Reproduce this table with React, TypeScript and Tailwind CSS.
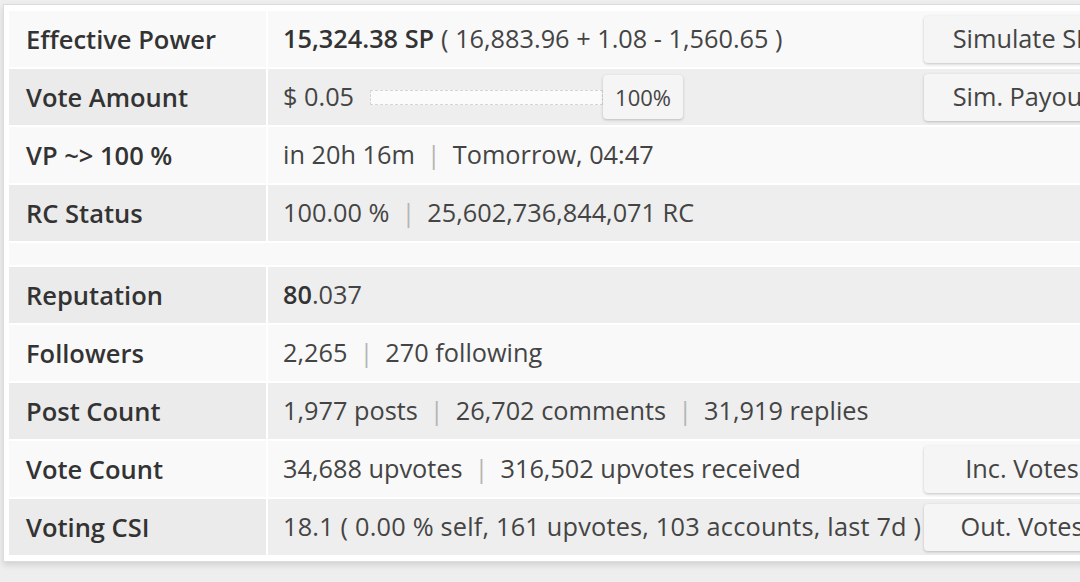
import React from 'react';

const Sep = () => <span className="mx-[12px] text-[#b5b5b5]">|</span>;

const Btn = ({ children }: { children: React.ReactNode }) => (
  <button className="w-[196px] h-[47px] shrink-0 rounded-[4px] bg-[#f5f5f5] text-[#444] shadow-[0_1px_3px_rgba(0,0,0,0.22)] text-center">
    {children}
  </button>
);

interface RowProps {
  label: string;
  grey?: boolean;
  children: React.ReactNode;
  action?: string;
}

const Row: React.FC<RowProps> = ({ label, grey, children, action }) => (
  <div className="flex h-[56px] gap-[2px]">
    <div
      className={`w-[257px] shrink-0 flex items-center pl-[17px] text-[25.5px] font-semibold text-[#333] ${grey ? 'bg-[#ebebeb]' : 'bg-[#f9f9f9]'}`}
    >
      {label}
    </div>
    <div
      className={`flex-1 flex items-center justify-between pl-[15px] pr-[8px] text-[#444] ${grey ? 'bg-[#eeeeee]' : 'bg-[#f9f9f9]'}`}
    >
      <div className="flex items-center whitespace-nowrap">{children}</div>
      {action && <Btn>{action}</Btn>}
    </div>
  </div>
);

export default function App() {
  return (
    <div
      className="w-[1080px] h-[582px] overflow-hidden bg-[#eeeeee] pt-[4px] pl-[3px] text-[25.3px]"
      style={{ fontFamily: '"Open Sans", "Noto Sans", sans-serif' }}
    >
      <div className="w-[1132px] bg-white border border-[#dcdcdc] py-[6px] pl-[5px] pr-[6px] flex flex-col gap-[2px] shadow-[0_3px_6px_rgba(0,0,0,0.12)]">
        <Row label="Effective Power" action="Simulate SP">
          <span className="font-semibold text-[#333]">15,324.38 SP</span>
          <span className="ml-[7px]">( 16,883.96 + 1.08 - 1,560.65 )</span>
        </Row>
        <Row label="Vote Amount" grey action="Sim. Payout">
          <span>$ 0.05</span>
          <div className="ml-[16px] flex items-center">
            <div className="w-[233px] h-[15px] bg-[#fbfbfb] border border-dashed border-[#d6d6d6]" />
            <div className="w-[80px] h-[44px] rounded-[4px] bg-[#f5f5f5] shadow-[0_1px_3px_rgba(0,0,0,0.22)] flex items-center justify-center text-[22px] text-[#444]">
              100%
            </div>
          </div>
        </Row>
        <Row label="VP ~> 100 %">
          <span>in 20h 16m</span>
          <Sep />
          <span>Tomorrow, 04:47</span>
        </Row>
        <Row label="RC Status" grey>
          <span>100.00 %</span>
          <Sep />
          <span>25,602,736,844,071 RC</span>
        </Row>
        <div className="h-[22px] bg-[#f9f9f9]" />
        <Row label="Reputation" grey>
          <span>
            <span className="font-semibold text-[#333]">80</span>.037
          </span>
        </Row>
        <Row label="Followers">
          <span>2,265</span>
          <Sep />
          <span>270 following</span>
        </Row>
        <Row label="Post Count" grey>
          <span>1,977 posts</span>
          <Sep />
          <span>26,702 comments</span>
          <Sep />
          <span>31,919 replies</span>
        </Row>
        <Row label="Vote Count" action="Inc. Votes">
          <span>34,688 upvotes</span>
          <Sep />
          <span>316,502 upvotes received</span>
        </Row>
        <Row label="Voting CSI" grey action="Out. Votes">
          <span className="tracking-[0.2px]">18.1 ( 0.00 % self, 161 upvotes, 103 accounts, last 7d )</span>
        </Row>
      </div>
    </div>
  );
}
